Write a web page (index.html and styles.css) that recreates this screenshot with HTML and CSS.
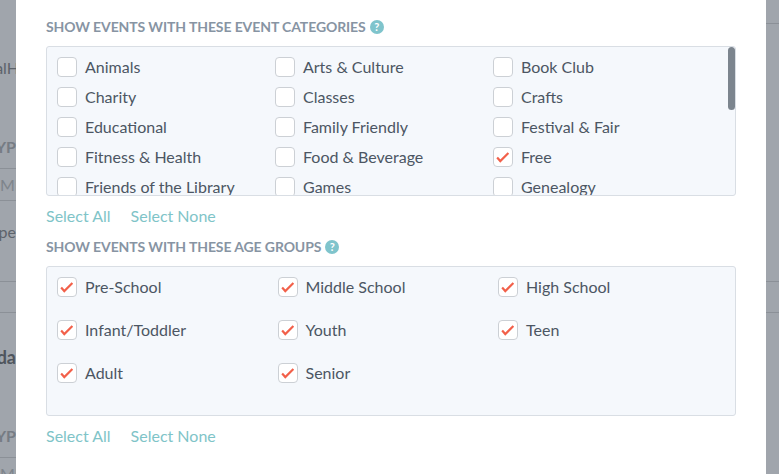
FILE: index.html
```html
<!DOCTYPE html>
<html lang="en">
<head>
    <meta charset="UTF-8">
    <title>Event Filters</title>
    <link rel="stylesheet" href="styles.css">
</head>
<body>
    <div class="backdrop">
        <div class="page-strip left">
            <div class="strip-text name">alH</div>
            <div class="strip-text head first-head">YP</div>
            <div class="strip-cell">MI</div>
            <div class="strip-text type">ype</div>
            <div class="strip-rule rule-a"></div>
            <div class="strip-rule rule-b"></div>
            <div class="strip-text title">da</div>
            <div class="strip-text head second-head">YP</div>
            <div class="strip-cell">MI</div>
        </div>

        <div class="modal">
            <h3 class="group-title">Show events with these event categories <span class="help">?</span></h3>
            <div class="choice-box scroll">
                <div class="choice-grid categories">
                    <label class="choice"><span class="check"></span>Animals</label>
                    <label class="choice"><span class="check"></span>Arts &amp; Culture</label>
                    <label class="choice"><span class="check"></span>Book Club</label>
                    <label class="choice"><span class="check"></span>Charity</label>
                    <label class="choice"><span class="check"></span>Classes</label>
                    <label class="choice"><span class="check"></span>Crafts</label>
                    <label class="choice"><span class="check"></span>Educational</label>
                    <label class="choice"><span class="check"></span>Family Friendly</label>
                    <label class="choice"><span class="check"></span>Festival &amp; Fair</label>
                    <label class="choice"><span class="check"></span>Fitness &amp; Health</label>
                    <label class="choice"><span class="check"></span>Food &amp; Beverage</label>
                    <label class="choice"><span class="check"><svg viewBox="0 0 20 20"><path d="M3.500 10.500l3.500 4 9-9"/></svg></span>Free</label>
                    <label class="choice"><span class="check"></span>Friends of the Library</label>
                    <label class="choice"><span class="check"></span>Games</label>
                    <label class="choice"><span class="check"></span>Genealogy</label>
                </div>
                <div class="scroll-thumb"></div>
            </div>
            <div class="select-links">
                <a href="#">Select All</a>
                <a href="#">Select None</a>
            </div>

            <h3 class="group-title ages-title">Show events with these age groups <span class="help">?</span></h3>
            <div class="choice-box">
                <div class="choice-grid ages">
                    <label class="choice"><span class="check"><svg viewBox="0 0 20 20"><path d="M3.500 10.500l3.500 4 9-9"/></svg></span>Pre-School</label>
                    <label class="choice"><span class="check"><svg viewBox="0 0 20 20"><path d="M3.500 10.500l3.500 4 9-9"/></svg></span>Middle School</label>
                    <label class="choice"><span class="check"><svg viewBox="0 0 20 20"><path d="M3.500 10.500l3.500 4 9-9"/></svg></span>High School</label>
                    <label class="choice"><span class="check"><svg viewBox="0 0 20 20"><path d="M3.500 10.500l3.500 4 9-9"/></svg></span>Infant/Toddler</label>
                    <label class="choice"><span class="check"><svg viewBox="0 0 20 20"><path d="M3.500 10.500l3.500 4 9-9"/></svg></span>Youth</label>
                    <label class="choice"><span class="check"><svg viewBox="0 0 20 20"><path d="M3.500 10.500l3.500 4 9-9"/></svg></span>Teen</label>
                    <label class="choice"><span class="check"><svg viewBox="0 0 20 20"><path d="M3.500 10.500l3.500 4 9-9"/></svg></span>Adult</label>
                    <label class="choice"><span class="check"><svg viewBox="0 0 20 20"><path d="M3.500 10.500l3.500 4 9-9"/></svg></span>Senior</label>
                </div>
            </div>
            <div class="select-links">
                <a href="#">Select All</a>
                <a href="#">Select None</a>
            </div>
        </div>

        <div class="page-strip right">
            <div class="strip-rule rule-top"></div>
            <div class="strip-rule rule-a"></div>
            <div class="strip-rule rule-b"></div>
        </div>
    </div>
</body>
</html>
```

FILE: styles.css
```css
* {
    box-sizing: border-box;
}

html, body {
    margin: 0;
    height: 100%;
    overflow: hidden;
}

body {
    font-family: 'Lato', sans-serif;
    color: #4c5663;
    background-color: #a0a5ac;
}

.backdrop {
    display: grid;
    grid-template-columns: 16px 750px 13px;
    height: 474px;
}

.page-strip {
    display: flex;
    flex-direction: column;
    overflow: hidden;
    color: #5d636b;
    font-size: 16px;
    white-space: nowrap;
}

.page-strip.left {
    align-items: flex-end;
}

.strip-text {
    line-height: 20px;
}

.strip-text.name {
    margin-top: 58px;
    margin-right: -3px;
}

.strip-text.head {
    font-weight: 700;
    color: #767c84;
}

.strip-text.first-head {
    margin-top: 59px;
}

.strip-text.type {
    margin-top: 21px;
}

.strip-cell {
    width: 100%;
    height: 33px;
    margin-top: 11px;
    border-top: 1px solid #8b9097;
    border-bottom: 1px solid #8b9097;
    color: #7e848b;
    line-height: 31px;
    text-align: right;
}

.strip-text.title {
    margin-top: 34px;
    font-size: 18px;
    font-weight: 700;
    color: #4f555d;
}

.strip-text.second-head {
    margin-top: 59px;
}

.strip-rule {
    width: 100%;
    height: 1px;
    flex: none;
    background: #8b9097;
}

.left .strip-rule.rule-a {
    margin-top: 39px;
}

.strip-rule.rule-b {
    margin-top: 30px;
}

.right .strip-rule.rule-top {
    margin-top: 23px;
}

.right .strip-rule.rule-a {
    margin-top: 257px;
}

.modal {
    background: #ffffff;
    padding: 17px 30px 0;
}

.group-title {
    display: flex;
    align-items: center;
    gap: 4px;
    height: 20px;
    margin: 0 0 9px;
    color: #8794a3;
    font-size: 14px;
    font-weight: 700;
    letter-spacing: -0.1px;
    line-height: 20px;
    text-transform: uppercase;
}

.ages-title {
    margin-top: 11px;
}

.help {
    width: 14px;
    height: 14px;
    border-radius: 50%;
    background: #7fc4cc;
    color: #ffffff;
    font-size: 11px;
    line-height: 14px;
    text-align: center;
}

.choice-box {
    position: relative;
    height: 150px;
    border: 1px solid #d9dee4;
    border-radius: 3px;
    background: #f5f8fc;
    overflow: hidden;
}

.choice-grid {
    display: grid;
    padding: 10px 0 0 10px;
}

.choice-grid.categories {
    grid-template-columns: repeat(3, 218px);
    grid-auto-rows: 30px;
}

.choice-grid.ages {
    grid-template-columns: repeat(3, 220.500px);
    grid-auto-rows: 43px;
}

.choice {
    display: flex;
    align-items: flex-start;
    gap: 8px;
    font-size: 16px;
    line-height: 20px;
    white-space: nowrap;
}

.check {
    flex: none;
    width: 20px;
    height: 20px;
    border: 1px solid #ccd0d5;
    border-radius: 4px;
    background: #ffffff;
}

.check svg {
    display: block;
    width: 18px;
    height: 18px;
    fill: none;
    stroke: #f2604a;
    stroke-width: 2.400;
}

.scroll-thumb {
    position: absolute;
    top: 0;
    right: 0;
    width: 7px;
    height: 63px;
    border-radius: 4px;
    background: #7c858e;
}

.select-links {
    display: flex;
    gap: 20px;
    height: 20px;
    margin-top: 10px;
    font-size: 16px;
    line-height: 20px;
}

.select-links a {
    color: #7fc4c8;
    text-decoration: none;
}
```
